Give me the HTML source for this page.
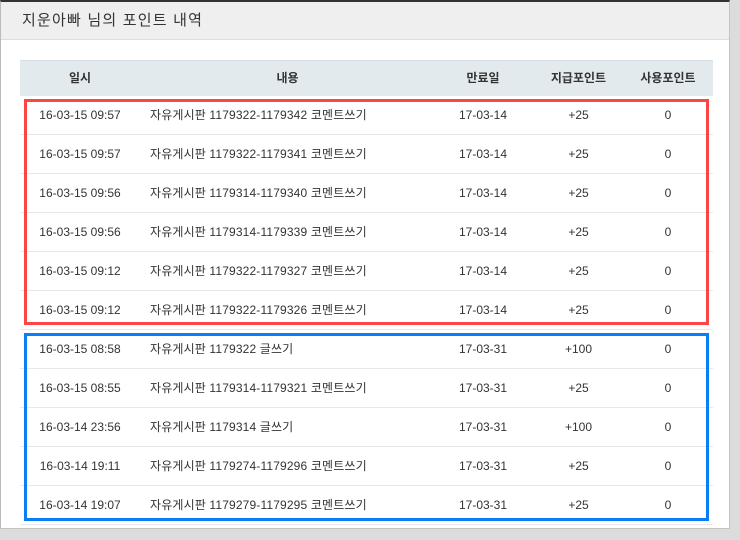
<!DOCTYPE html>
<html><head><meta charset="utf-8"><style>
*{margin:0;padding:0;box-sizing:border-box}
body{width:740px;height:540px;background:#dcdcdc;position:relative;overflow:hidden;font-family:"Liberation Sans","Noto Sans CJK KR","NanumGothic",sans-serif;font-size:12px;color:#333}
.win{position:absolute;left:0;top:0;width:730px;height:529px;background:#fff;border-left:1px solid #bbb;border-right:1px solid #c4c4c4;border-bottom:1px solid #c4c4c4;border-top:2px solid #333}
.hd{height:38px;background:#efefef;border-bottom:1px solid #ddd;padding-left:21px;font-size:15px;line-height:38px;color:#333;letter-spacing:1.2px}
.th{position:absolute;left:20px;top:60px;width:693px;height:36px;background:#e3eaee;border-top:1px solid #d6dee3;font-weight:bold}
.r{position:absolute;left:20px;width:693px;height:39px;border-bottom:1px solid #e8e8e8}
.c{position:absolute;top:0;line-height:38px;text-align:center;white-space:nowrap}
.th .c{line-height:34px}
.b{letter-spacing:0.15px}
.a{left:0;width:120px}.b{left:130px;text-align:left}.bh{left:180px;width:175px}.d{left:420px;width:86px}.e{left:520px;width:77px}.f{left:610px;width:76px}
.box{position:absolute;border:3px solid}
</style></head><body>
<div class="win"><div class="hd">지운아빠 님의 포인트 내역</div></div>
<div class="th"><span class="c a">일시</span><span class="c bh">내용</span><span class="c d">만료일</span><span class="c e">지급포인트</span><span class="c f">사용포인트</span></div>
<div class="r" style="top:96px"><span class="c a">16-03-15 09:57</span><span class="c b">자유게시판 1179322-1179342 코멘트쓰기</span><span class="c d">17-03-14</span><span class="c e">+25</span><span class="c f">0</span></div>
<div class="r" style="top:135px"><span class="c a">16-03-15 09:57</span><span class="c b">자유게시판 1179322-1179341 코멘트쓰기</span><span class="c d">17-03-14</span><span class="c e">+25</span><span class="c f">0</span></div>
<div class="r" style="top:174px"><span class="c a">16-03-15 09:56</span><span class="c b">자유게시판 1179314-1179340 코멘트쓰기</span><span class="c d">17-03-14</span><span class="c e">+25</span><span class="c f">0</span></div>
<div class="r" style="top:213px"><span class="c a">16-03-15 09:56</span><span class="c b">자유게시판 1179314-1179339 코멘트쓰기</span><span class="c d">17-03-14</span><span class="c e">+25</span><span class="c f">0</span></div>
<div class="r" style="top:252px"><span class="c a">16-03-15 09:12</span><span class="c b">자유게시판 1179322-1179327 코멘트쓰기</span><span class="c d">17-03-14</span><span class="c e">+25</span><span class="c f">0</span></div>
<div class="r" style="top:291px"><span class="c a">16-03-15 09:12</span><span class="c b">자유게시판 1179322-1179326 코멘트쓰기</span><span class="c d">17-03-14</span><span class="c e">+25</span><span class="c f">0</span></div>
<div class="r" style="top:330px"><span class="c a">16-03-15 08:58</span><span class="c b">자유게시판 1179322 글쓰기</span><span class="c d">17-03-31</span><span class="c e">+100</span><span class="c f">0</span></div>
<div class="r" style="top:369px"><span class="c a">16-03-15 08:55</span><span class="c b">자유게시판 1179314-1179321 코멘트쓰기</span><span class="c d">17-03-31</span><span class="c e">+25</span><span class="c f">0</span></div>
<div class="r" style="top:408px"><span class="c a">16-03-14 23:56</span><span class="c b">자유게시판 1179314 글쓰기</span><span class="c d">17-03-31</span><span class="c e">+100</span><span class="c f">0</span></div>
<div class="r" style="top:447px"><span class="c a">16-03-14 19:11</span><span class="c b">자유게시판 1179274-1179296 코멘트쓰기</span><span class="c d">17-03-31</span><span class="c e">+25</span><span class="c f">0</span></div>
<div class="r" style="top:486px"><span class="c a">16-03-14 19:07</span><span class="c b">자유게시판 1179279-1179295 코멘트쓰기</span><span class="c d">17-03-31</span><span class="c e">+25</span><span class="c f">0</span></div>
<div class="box" style="left:24px;top:99px;width:685px;height:226px;border-color:#fd4545"></div>
<div class="box" style="left:24px;top:333px;width:685px;height:188px;border-color:#0a7ff5"></div>
</body></html>
